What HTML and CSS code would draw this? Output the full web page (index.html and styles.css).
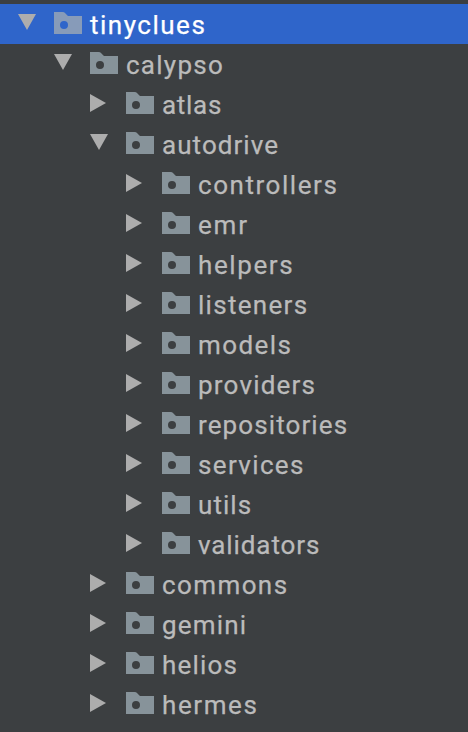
FILE: index.html
```html
<!DOCTYPE html>
<html lang="en">
<head>
<meta charset="utf-8">
<title>Project tree</title>
<link rel="stylesheet" href="styles.css">
</head>
<body>
<svg class="defs" width="0" height="0">
  <symbol id="open" viewBox="0 0 18 18"><path d="M0 1H18L9 17Z"/></symbol>
  <symbol id="closed" viewBox="0 0 18 18"><path d="M0 0L16 9L0 18Z"/></symbol>
  <symbol id="folder" viewBox="0 0 28 22"><path fill-rule="evenodd" d="M0 0H8.5C11 0 11.5 2 14 4H28V22H0ZM10 9a4 4 0 1 0 0 8a4 4 0 1 0 0-8Z"/></symbol>
</svg>
<ul class="tree" id="tree"></ul>
<script src="tree.js"></script>
</body>
</html>
```
FILE: styles.css
```css
body {
  margin: 0;
  height: 732px;
  overflow: hidden;
  background: #3c3f41;
  font-family: Roboto, sans-serif;
  font-size: 26px;
  color: #bbbbbb;
}
.defs { display: block; }
.tree {
  list-style: none;
  margin: 0;
  padding: 4px 0 0;
}
.row {
  display: flex;
  align-items: flex-start;
  box-sizing: border-box;
  height: 40px;
  padding-left: 18px;
}
.level-1 { padding-left: 54px; }
.level-2 { padding-left: 90px; }
.level-3 { padding-left: 126px; }
.selected { background: #2f65ca; color: #ffffff; }
.arrow {
  width: 18px;
  height: 18px;
  margin: 9px 18px 0 0;
  fill: #adadad;
}
.closed { margin-top: 10px; }
.folder {
  width: 28px;
  height: 22px;
  margin: 8px 8px 0 0;
  fill: #87939a;
}
.selected .folder { fill: #879bb9; }
.label {
  line-height: 40px;
  padding-top: 1px;
  -webkit-text-stroke: 0.25px currentColor;
}
```
FILE: tree.js
```js
// level, name, letter spacing in px, expanded
const rows = [
  [0, "tinyclues", 1.5, true],
  [1, "calypso", 1.25, true],
  [2, "atlas", 0.7],
  [2, "autodrive", 1.05, true],
  [3, "controllers", 1.55],
  [3, "emr", 1.8],
  [3, "helpers", 1.6],
  [3, "listeners", 1.3],
  [3, "models", 1.4],
  [3, "providers", 1.2],
  [3, "repositories", 1.1],
  [3, "services", 1.35],
  [3, "utils", 1.05],
  [3, "validators", 0.9],
  [2, "commons", 1.4],
  [2, "gemini", 1.2],
  [2, "helios", 1.2],
  [2, "hermes", 1.6]
];

document.getElementById("tree").innerHTML = rows.map(([level, name, spacing, open]) => {
  const state = open ? "open" : "closed";
  return `<li class="row level-${level}${level === 0 ? " selected" : ""}">
    <svg class="arrow ${state}"><use href="#${state}"/></svg>
    <svg class="folder"><use href="#folder"/></svg>
    <span class="label" style="letter-spacing: ${spacing}px">${name}</span>
  </li>`;
}).join("");
```
